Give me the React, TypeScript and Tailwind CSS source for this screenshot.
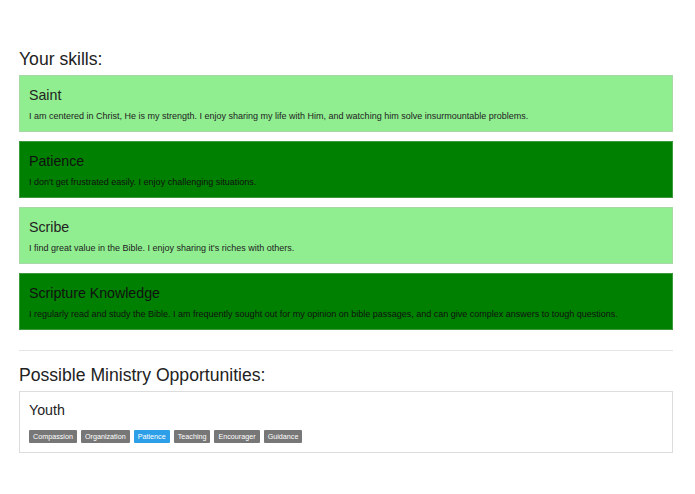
import React from "react";

const skills = [
  { title: "Saint", desc: "I am centered in Christ, He is my strength. I enjoy sharing my life with Him, and watching him solve insurmountable problems.", dark: false },
  { title: "Patience", desc: "I don't get frustrated easily. I enjoy challenging situations.", dark: true },
  { title: "Scribe", desc: "I find great value in the Bible. I enjoy sharing it's riches with others.", dark: false },
  { title: "Scripture Knowledge", desc: "I regularly read and study the Bible. I am frequently sought out for my opinion on bible passages, and can give complex answers to tough questions.", dark: true },
];

const tags = [
  { t: "Compassion", hl: false },
  { t: "Organization", hl: false },
  { t: "Patience", hl: true },
  { t: "Teaching", hl: false },
  { t: "Encourager", hl: false },
  { t: "Guidance", hl: false },
];

export default function App() {
  return (
    <div className="min-h-[494px] w-[695px] bg-white text-[#222]" style={{ fontFamily: '"Liberation Sans", Arial, sans-serif' }}>
      <div className="ml-[19px] w-[654px] pt-[48px]">
        <h2 className="text-[17.6px] leading-[22px] mb-[5px]">Your skills:</h2>
        <div className="flex flex-col gap-[9px]">
          {skills.map((s) => (
            <div
              key={s.title}
              className={
                s.dark
                  ? "h-[57px] border border-[#3c9a3c] bg-[#008000] px-[9px] pt-[11px] text-[#111]"
                  : "h-[57px] border border-[#a8d8a8] bg-[#90ee90] px-[9px] pt-[11px] text-[#222]"
              }
            >
              <div className="text-[14.2px] leading-[17px]">{s.title}</div>
              <div className="mt-[5px] text-[9px] leading-[14px]">{s.desc}</div>
            </div>
          ))}
        </div>
        <div className="mt-[20px] border-t border-[#e5e5e5]" />
        <h2 className="mt-[13px] text-[17.6px] leading-[22px] mb-[5px]">Possible Ministry Opportunities:</h2>
        <div className="h-[62px] border border-[#dddddd] bg-white px-[9px] pt-[10px]">
          <div className="text-[14.2px] leading-[17px]">Youth</div>
          <div className="mt-[11px] flex gap-[4px]">
            {tags.map((g) => (
              <span
                key={g.t}
                className={
                  (g.hl ? "bg-[#2d9ee8]" : "bg-[#777777]") +
                  " h-[13px] px-[4px] text-[7.2px] leading-[13px] text-white rounded-[1px]"
                }
              >
                {g.t}
              </span>
            ))}
          </div>
        </div>
      </div>
    </div>
  );
}
